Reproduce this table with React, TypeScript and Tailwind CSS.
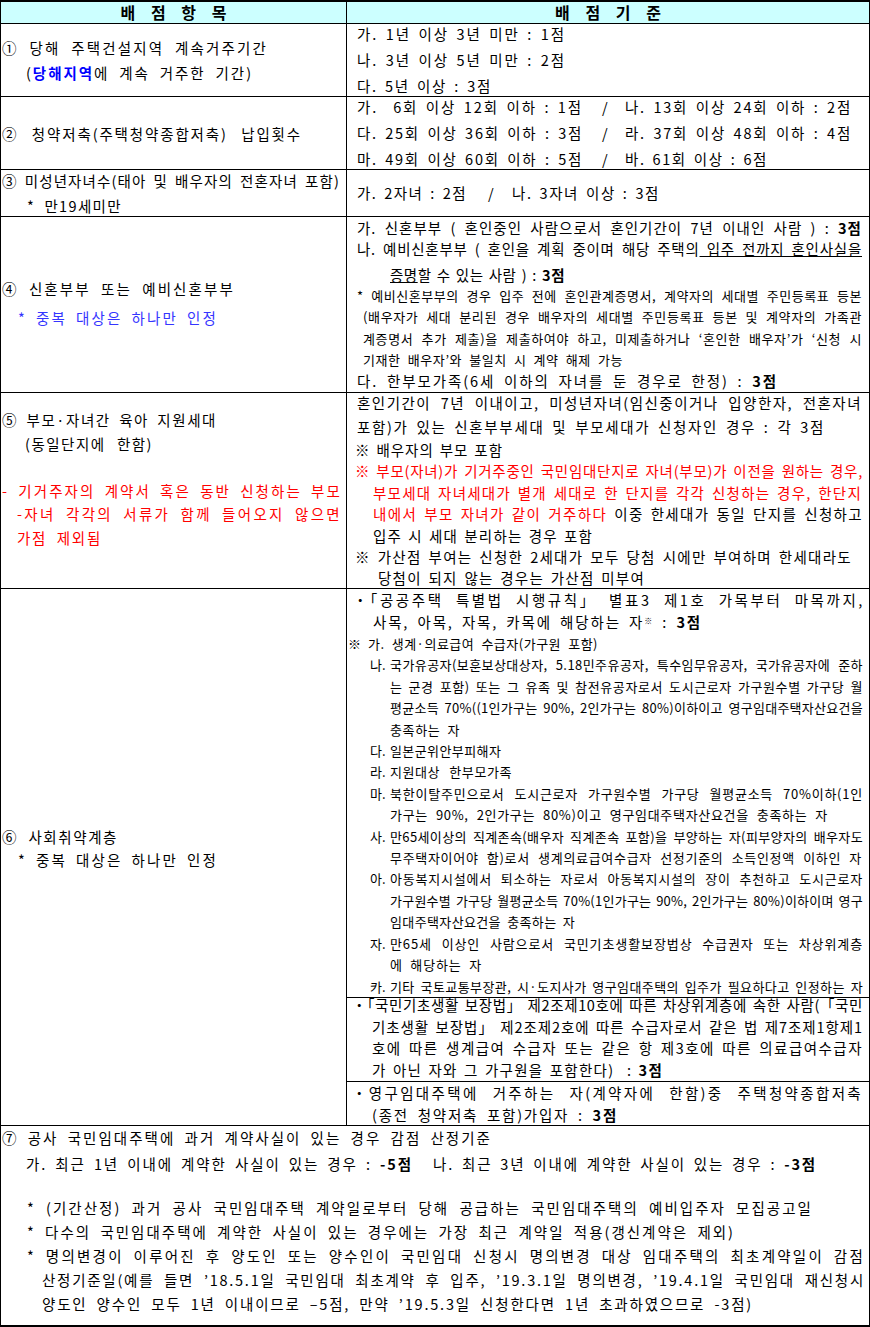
import React, { useLayoutEffect, useRef, useState } from "react";

// one justified line, stretched to the width given in className.
// part of the free room goes to letter spacing (measured once), the rest to the gaps.
const J = ({ className = "", k = 0.7, children }: { className?: string; k?: number; children?: React.ReactNode }) => {
  const box = useRef<HTMLDivElement>(null);
  const txt = useRef<HTMLSpanElement>(null);
  const [ls, setLs] = useState<number | null>(null);

  useLayoutEffect(() => {
    const b = box.current;
    const t = txt.current;
    if (!b || !t) return;
    const slack = b.clientWidth - t.getBoundingClientRect().width;
    const n = Math.max(1, (t.textContent || "").length);
    setLs(slack < 0 ? slack / n - 0.05 : (slack * k) / n);
  }, [k]);

  return (
    <div ref={box} className={(ls === null ? "whitespace-nowrap " : "text-justify [text-align-last:justify] ") + className}>
      <span ref={txt} style={ls === null ? undefined : { letterSpacing: `${ls}px` }}>
        {children}
      </span>
    </div>
  );
};

// symbols kept out of justification (no extra gap around them)
const S = ({ children }: { children?: React.ReactNode }) => <span className="inline-block">{children}</span>;

// label ("나.") + justified text, used in the 사회취약계층 list
const Item = ({ label, className = "", children }: { label: string; className?: string; children?: React.ReactNode }) => (
  <div className="ml-[23px] flex">
    <div className="w-[20px] shrink-0">{label}</div>
    <J className={className} k={0.5}>
      {children}
    </J>
  </div>
);

export default function App() {
  return (
    <div className="w-[870px] bg-white font-['Noto_Sans_CJK_KR',sans-serif] text-[14.5px] text-black">
      <div className="border-x border-t-2 border-b-2 border-black">
        {/* header */}
        <div className="flex h-[22px] border-b border-black bg-[#ccffff] text-[16px] font-bold leading-[21px]">
          <div className="w-[346px] shrink-0 border-r border-black pl-[6px] text-center tracking-[6px]">배 점 항 목</div>
          <div className="flex-1 pl-[6px] text-center tracking-[6px]">배 점 기 준</div>
        </div>

        {/* ① */}
        <div className="flex h-[73px] border-b border-black">
          <div className="flex w-[346px] shrink-0 flex-col justify-center border-r border-black leading-[25px]">
            <J className="ml-[1px] w-[266px]"><S>①</S> 당해 주택건설지역 계속거주기간</J>
            <J className="ml-[25px] w-[227px]">
              (<span className="font-bold text-[#0000ff]">당해지역</span>에 계속 거주한 기간)
            </J>
          </div>
          <div className="flex flex-1 flex-col justify-center leading-[26px]">
            <J className="ml-[10px] w-[209px]">가. 1년 이상 3년 미만 : 1점</J>
            <J className="ml-[10px] w-[209px]">나. 3년 이상 5년 미만 : 2점</J>
            <J className="ml-[10px] w-[135px]">다. 5년 이상 : 3점</J>
          </div>
        </div>

        {/* ② */}
        <div className="flex h-[73px] border-b border-black">
          <div className="flex w-[346px] shrink-0 flex-col justify-center border-r border-black leading-[25px]">
            <J className="ml-[1px] w-[300px]"><S>②</S> 청약저축(주택청약종합저축) 납입횟수</J>
          </div>
          <div className="flex flex-1 flex-col justify-center leading-[26px]">
            <div className="ml-[10px] flex">
              <J className="w-[226px]">가.&nbsp; 6회 이상 12회 이하 : 1점</J>
              <div className="ml-[19px] w-[23px]">/</div>
              <J className="w-[227px]">나. 13회 이상 24회 이하 : 2점</J>
            </div>
            <div className="ml-[10px] flex">
              <J className="w-[226px]">다. 25회 이상 36회 이하 : 3점</J>
              <div className="ml-[19px] w-[23px]">/</div>
              <J className="w-[227px]">라. 37회 이상 48회 이하 : 4점</J>
            </div>
            <div className="ml-[10px] flex">
              <J className="w-[226px]">마. 49회 이상 60회 이하 : 5점</J>
              <div className="ml-[19px] w-[23px]">/</div>
              <J className="w-[143px]">바. 61회 이상 : 6점</J>
            </div>
          </div>
        </div>

        {/* ③ */}
        <div className="flex h-[47px] border-b border-black">
          <div className="flex w-[346px] shrink-0 flex-col justify-center border-r border-black leading-[25px]">
            <J className="ml-[1px] w-[338px]"><S>③</S> 미성년자녀수(태아 및 배우자의 전혼자녀 포함)</J>
            <J className="ml-[26px] w-[95px]">* 만19세미만</J>
          </div>
          <div className="flex flex-1 flex-col justify-center leading-[26px]">
            <div className="ml-[10px] flex">
              <J className="w-[110px]">가. 2자녀 : 2점</J>
              <div className="ml-[21px] w-[24px]">/</div>
              <J className="w-[148px]">나. 3자녀 이상 : 3점</J>
            </div>
          </div>
        </div>

        {/* ④ */}
        <div className="flex h-[176px] border-b border-black">
          <div className="flex w-[346px] shrink-0 flex-col justify-center border-r border-black pb-[4px] leading-[29px]">
            <J className="ml-[1px] w-[233px]"><S>④</S> 신혼부부 또는 예비신혼부부</J>
            <J className="ml-[17px] w-[200px] text-[#3535ff]">* 중복 대상은 하나만 인정</J>
          </div>
          <div className="flex-1">
            <J className="ml-[10px] w-[505px] leading-[21px]" k={0.5}>
              가. 신혼부부 ( 혼인중인 사람으로서 혼인기간이 7년 이내인 사람 ) : <b>3점</b>
            </J>
            <J className="ml-[10px] w-[505px] leading-[21px]" k={0.5}>
              나. 예비신혼부부 ( 혼인을 계획 중이며 해당 주택의<u> 입주 전까지 혼인사실을</u>
            </J>
            <J className="ml-[43px] mt-[5px] w-[175px] leading-[21px]" k={0.5}>
              <u>증명</u>할 수 있는 사람 ) : <b>3점</b>
            </J>
            <div className="text-[13px] leading-[21.3px]">
              <J className="ml-[10px] w-[505px]" k={0.4}>* 예비신혼부부의 경우 입주 전에 혼인관계증명서, 계약자의 세대별 주민등록표 등본</J>
              <J className="ml-[16px] w-[499px]" k={0.4}>(배우자가 세대 분리된 경우 배우자의 세대별 주민등록표 등본 및 계약자의 가족관</J>
              <J className="ml-[16px] w-[499px]" k={0.4}>계증명서 추가 제출)을 제출하여야 하고, 미제출하거나 ‘혼인한 배우자’가 ‘신청 시</J>
              <J className="ml-[16px] w-[260px]" k={0.4}>기재한 배우자’와 불일치 시 계약 해제 가능</J>
            </div>
            <J className="ml-[10px] w-[421px] leading-[21.3px]">
              다. 한부모가족(6세 이하의 자녀를 둔 경우로 한정) : <b>3점</b>
            </J>
          </div>
        </div>

        {/* ⑤ */}
        <div className="flex h-[196px] border-b border-black">
          <div className="w-[346px] shrink-0 border-r border-black pt-[15px] leading-[23.5px]">
            <J className="ml-[1px] w-[215px]"><S>⑤</S> 부모·자녀간 육아 지원세대</J>
            <J className="ml-[24px] w-[128px]">(동일단지에 한함)</J>
            <div className="h-[23.5px]" />
            <div className="text-[#ff0000]">
              <J className="ml-[1px] w-[340px]">- 기거주자의 계약서 혹은 동반 신청하는 부모</J>
              <J className="ml-[16px] w-[325px]">-자녀 각각의 서류가 함께 들어오지 않으면</J>
              <J className="ml-[16px] w-[85px]">가점 제외됨</J>
            </div>
          </div>
          <div className="flex-1">
            <J className="ml-[10px] -mt-[2px] w-[505px] leading-[24px]">
              혼인기간이 7년 이내이고, 미성년자녀(임신중이거나 입양한자, 전혼자녀
            </J>
            <J className="ml-[10px] w-[468px] leading-[24px]">
              포함)가 있는 신혼부부세대 및 부모세대가 신청자인 경우 : 각 3점
            </J>
            <div className="leading-[21.4px]">
              <J className="ml-[8px] w-[148px]"><S>※</S> 배우자의 부모 포함</J>
              <J className="ml-[8px] w-[508px] text-[#ff0000]">
                <S>※</S> 부모(자녀)가 기거주중인 국민임대단지로 자녀(부모)가 이전을 원하는 경우,
              </J>
              <J className="ml-[26px] w-[489px] text-[#ff0000]">
                부모세대 자녀세대가 별개 세대로 한 단지를 각각 신청하는 경우, 한단지
              </J>
              <J className="ml-[26px] w-[490px]">
                <span className="text-[#ff0000]">내에서 부모 자녀가 같이 거주하다</span> 이중 한세대가 동일 단지를 신청하고
              </J>
              <J className="ml-[26px] w-[220px]">입주 시 세대 분리하는 경우 포함</J>
              <J className="ml-[8px] w-[497px]"><S>※</S> 가산점 부여는 신청한 2세대가 모두 당첨 시에만 부여하며 한세대라도</J>
              <J className="ml-[31px] w-[267px]">당첨이 되지 않는 경우는 가산점 미부여</J>
            </div>
          </div>
        </div>

        {/* ⑥ */}
        <div className="flex h-[537px] border-b border-black">
          <div className="w-[346px] shrink-0 border-r border-black pt-[236px] leading-[23px]">
            <J className="ml-[1px] w-[116px]"><S>⑥</S> 사회취약계층</J>
            <J className="ml-[17px] w-[200px]">* 중복 대상은 하나만 인정</J>
          </div>
          <div className="flex flex-1 flex-col">
            <div className="h-[409px] border-b border-black">
              <div className="leading-[22px]">
                <J className="ml-[6px] w-[512px]"><S>・「</S>공공주택 특별법 시행규칙<S>」</S> 별표3 제1호 가목부터 마목까지,</J>
                <J className="ml-[26px] w-[329px]">
                  사목, 아목, 자목, 카목에 해당하는 자<sup className="inline-block text-[8px]">※</sup> : <b>3점</b>
                </J>
              </div>
              <div className="text-[13px] leading-[21.4px]">
                <div className="ml-[1px] flex">
                  <div className="w-[20px] shrink-0">※</div>
                  <J className="w-[230px]" k={0.5}>가. 생계·의료급여 수급자(가구원 포함)</J>
                </div>
                <Item label="나." className="w-[473px]">
                  국가유공자(보훈보상대상자, 5.18민주유공자, 특수임무유공자, 국가유공자에 준하
                </Item>
                <J className="ml-[43px] w-[473px]" k={0.5}>는 군경 포함) 또는 그 유족 및 참전유공자로서 도시근로자 가구원수별 가구당 월</J>
                <J className="ml-[43px] w-[473px]" k={0.5}>평균소득 70%((1인가구는 90%, 2인가구는 80%)이하이고 영구임대주택자산요건을</J>
                <J className="ml-[43px] w-[70px]" k={0.5}>충족하는 자</J>
                <Item label="다." className="w-[115px]">일본군위안부피해자</Item>
                <Item label="라." className="w-[122px]">지원대상 한부모가족</Item>
                <Item label="마." className="w-[473px]">
                  북한이탈주민으로서 도시근로자 가구원수별 가구당 월평균소득 70%이하(1인
                </Item>
                <J className="ml-[43px] w-[438px]" k={0.5}>가구는 90%, 2인가구는 80%)이고 영구임대주택자산요건을 충족하는 자</J>
                <Item label="사." className="w-[473px]">
                  만65세이상의 직계존속(배우자 직계존속 포함)을 부양하는 자(피부양자의 배우자도
                </Item>
                <J className="ml-[43px] w-[472px]" k={0.5}>무주택자이어야 함)로서 생계의료급여수급자 선정기준의 소득인정액 이하인 자</J>
                <Item label="아." className="w-[473px]">
                  아동복지시설에서 퇴소하는 자로서 아동복지시설의 장이 추천하고 도시근로자
                </Item>
                <J className="ml-[43px] w-[473px]" k={0.5}>가구원수별 가구당 월평균소득 70%(1인가구는 90%, 2인가구는 80%)이하이며 영구</J>
                <J className="ml-[43px] w-[185px]" k={0.5}>임대주택자산요건을 충족하는 자</J>
                <Item label="자." className="w-[473px]">
                  만65세 이상인 사람으로서 국민기초생활보장법상 수급권자 또는 차상위계층
                </Item>
                <J className="ml-[43px] w-[92px]" k={0.5}>에 해당하는 자</J>
                <Item label="카." className="w-[473px]">
                  기타 국토교통부장관, 시·도지사가 영구임대주택의 입주가 필요하다고 인정하는 자
                </Item>
              </div>
            </div>
            <div className="h-[85px] border-b border-black">
              <div className="-mt-[4px] leading-[21.7px]">
                <J className="ml-[5px] w-[511px]"><S>・「</S>국민기초생활 보장법<S>」</S> 제2조제10호에 따른 차상위계층에 속한 사람(<S>「</S>국민</J>
                <J className="ml-[25px] w-[491px]">기초생활 보장법<S>」</S> 제2조제2호에 따른 수급자로서 같은 법 제7조제1항제1</J>
                <J className="ml-[25px] w-[491px]">호에 따른 생계급여 수급자 또는 같은 항 제3호에 따른 의료급여수급자</J>
                <J className="ml-[25px] w-[291px]">
                  가 아닌 자와 그 가구원을 포함한다)&nbsp; : <b>3점</b>
                </J>
              </div>
            </div>
            <div className="flex-1 leading-[22px]">
              <J className="ml-[5px] w-[511px]"><S>・</S>영구임대주택에 거주하는 자(계약자에 한함)중 주택청약종합저축</J>
              <J className="ml-[25px] w-[246px]">
                (종전 청약저축 포함)가입자 : <b>3점</b>
              </J>
            </div>
          </div>
        </div>

        {/* ⑦ */}
        <div className="h-[199px] leading-[24px]">
          <J className="ml-[1px] w-[490px]"><S>⑦</S> 공사 국민임대주택에 과거 계약사실이 있는 경우 감점 산정기준</J>
          <div className="ml-[25px] mt-[2px] flex">
            <J className="w-[387px]">
              가. 최근 1년 이내에 계약한 사실이 있는 경우 : <b>-5점</b>
            </J>
            <J className="ml-[20px] w-[384px]">
              나. 최근 3년 이내에 계약한 사실이 있는 경우 : <b>-3점</b>
            </J>
          </div>
          <J className="ml-[26px] mt-[20px] w-[786px]">
            * (기간산정) 과거 공사 국민임대주택 계약일로부터 당해 공급하는 국민임대주택의 예비입주자 모집공고일
          </J>
          <J className="ml-[26px] w-[708px]">
            * 다수의 국민임대주택에 계약한 사실이 있는 경우에는 가장 최근 계약일 적용(갱신계약은 제외)
          </J>
          <J className="ml-[26px] w-[838px]">
            * 명의변경이 이루어진 후 양도인 또는 양수인이 국민임대 신청시 명의변경 대상 임대주택의 최초계약일이 감점
          </J>
          <J className="ml-[41px] w-[823px]">
            산정기준일(예를 들면 ’18.5.1일 국민임대 최초계약 후 입주, ’19.3.1일 명의변경, ’19.4.1일 국민임대 재신청시
          </J>
          <J className="ml-[41px] w-[711px]">
            양도인 양수인 모두 1년 이내이므로 –5점, 만약 ’19.5.3일 신청한다면 1년 초과하였으므로 -3점)
          </J>
        </div>
      </div>
    </div>
  );
}
